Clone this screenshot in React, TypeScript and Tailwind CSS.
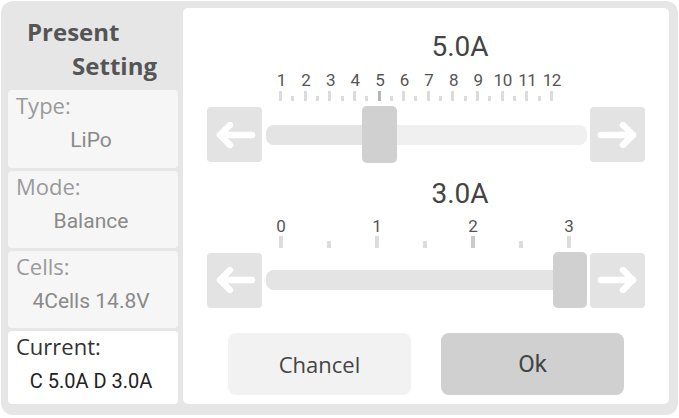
import React from "react";

const Arrow = ({ dir }: { dir: "left" | "right" }) => (
  <svg width="42" height="26" viewBox="0 0 42 26" className={dir === "right" ? "-scale-x-100" : ""}>
    <path
      d="M6 13 H38 M16 3 L6 13 L16 23"
      fill="none"
      stroke="#ffffff"
      strokeWidth="6.5"
      strokeLinecap="round"
      strokeLinejoin="round"
    />
  </svg>
);

const ArrowBtn = ({ dir }: { dir: "left" | "right" }) => (
  <div className="w-[55px] h-[55px] rounded-[4px] bg-[#e3e3e3] flex items-center justify-center">
    <Arrow dir={dir} />
  </div>
);

const Card = ({
  label,
  value,
  active,
  className,
}: {
  label: string;
  value: string;
  active?: boolean;
  className?: string;
}) => (
  <div className={`rounded-[4px] ${active ? "bg-white" : "bg-[#f6f6f6]"} ${className ?? ""}`}>
    <div
      className={`mt-[2px] pl-[8px] text-[22px] leading-[26px] ${active ? "text-[#333]" : "text-[#9a9a9a]"}`}
      style={{ fontFamily: "'Open Sans', sans-serif" }}
    >
      {label}
    </div>
    <div
      className={`mt-[10px] pr-[4px] text-center leading-[24px] ${active ? "text-[20px] text-[#222]" : "text-[21px] text-[#8a8a8a]"}`}
      style={{ fontFamily: "Roboto, sans-serif" }}
    >
      {value}
    </div>
  </div>
);

export default function App() {
  const nums = ["1", "2", "3", "4", "5", "6", "7", "8", "9", "10", "11", "12"];
  const ticks1 = Array.from({ length: 23 }, (_, i) => i);
  const ticks2 = Array.from({ length: 7 }, (_, i) => i);
  return (
    <div className="w-[679px] h-[418px] bg-white">
      <div className="ml-[1px] mt-[1px] w-[677px] h-[414px] rounded-[12px] bg-[#e6e6e6] pl-[7px] pt-[7px] flex gap-[5px]">
        {/* left column */}
        <div className="w-[170px] h-[396px] flex flex-col">
          <div
            className="h-[82px] text-[24px] font-bold leading-[34px] text-[#555] pt-[7px]"
            style={{ fontFamily: "'Open Sans', sans-serif" }}
          >
            <div className="pl-[19px]">Present</div>
            <div className="text-right pr-[21px]">Setting</div>
          </div>
          <div className="flex-1 flex flex-col gap-[3px]">
            <Card label="Type:" value="LiPo" className="h-[78px]" />
            <Card label="Mode:" value="Balance" className="h-[77px]" />
            <Card label="Cells:" value="4Cells 14.8V" className="h-[77px]" />
            <Card label="Current:" value="C 5.0A D 3.0A" active className="flex-1" />
          </div>
        </div>

        {/* right panel */}
        <div
          className="w-[486px] h-[396px] bg-white rounded-[5px] flex flex-col text-[#444]"
          style={{ fontFamily: "Roboto, sans-serif" }}
        >
          <div className="mt-[25px] pl-[68px] text-center text-[28px] leading-[28px] text-[#444]">5.0A</div>
          <div className="mt-[11px] ml-[86px] flex text-[17px] leading-[17px] text-[#555]">
            {nums.map((n) => (
              <div key={n} className="w-[24.6px] text-center tracking-[-0.5px]">
                {n}
              </div>
            ))}
          </div>
          <div className="mt-[2px] ml-[96px] w-[274px] h-[10px] flex justify-between items-end">
            {ticks1.map((i) => (
              <div
                key={i}
                className={`w-[3px] ${i % 2 === 0 ? "h-[10px]" : "h-[5px]"} ${i === 8 ? "bg-[#b5b5b5]" : "bg-[#dcdcdc]"}`}
              />
            ))}
          </div>
          <div className="mt-[5px] ml-[24px] h-[57px] flex items-center">
            <ArrowBtn dir="left" />
            <div className="ml-[4px] w-[321px] h-[20px] rounded-[8px] bg-[#f0f0f0] relative">
              <div className="absolute left-0 top-0 h-[20px] w-[100px] rounded-l-[8px] bg-[#e4e4e4]" />
              <div className="absolute left-[96px] top-[-19px] w-[35px] h-[57px] rounded-[5px] bg-[#d0d0d0]" />
            </div>
            <div className="ml-[3px]">
              <ArrowBtn dir="right" />
            </div>
          </div>

          <div className="mt-[17px] pl-[68px] text-center text-[28px] leading-[28px] text-[#444]">3.0A</div>
          <div className="mt-[10px] ml-[50px] flex text-[17px] leading-[17px] text-[#555]">
            {["0", "1", "2", "3"].map((n) => (
              <div key={n} className="w-[96px] text-center">
                {n}
              </div>
            ))}
          </div>
          <div className="mt-[1px] ml-[96px] w-[292px] h-[12px] flex justify-between items-end">
            {ticks2.map((i) => (
              <div
                key={i}
                className={`w-[4px] ${i % 2 === 0 ? "h-[12px]" : "h-[7px]"} ${i === 4 ? "bg-[#cacaca]" : "bg-[#dcdcdc]"}`}
              />
            ))}
          </div>
          <div className="mt-[4px] ml-[24px] h-[56px] flex items-center">
            <ArrowBtn dir="left" />
            <div className="ml-[4px] w-[321px] h-[20px] rounded-[8px] bg-[#e4e4e4] relative">
              <div className="absolute left-[287px] top-[-18px] w-[34px] h-[56px] rounded-[5px] bg-[#d0d0d0]" />
            </div>
            <div className="ml-[3px]">
              <ArrowBtn dir="right" />
            </div>
          </div>

          <div className="mt-[25px] ml-[45px] flex gap-[30px]">
            <div
              className="w-[183px] h-[62px] rounded-[8px] bg-[#f2f2f2] flex items-center justify-center text-[22px] text-[#444]"
              style={{ fontFamily: "'Open Sans', sans-serif" }}
            >
              Chancel
            </div>
            <div className="w-[183px] h-[62px] rounded-[8px] bg-[#d0d0d0] flex items-center justify-center text-[24px] text-[#444]">
              Ok
            </div>
          </div>
        </div>
      </div>
    </div>
  );
}
